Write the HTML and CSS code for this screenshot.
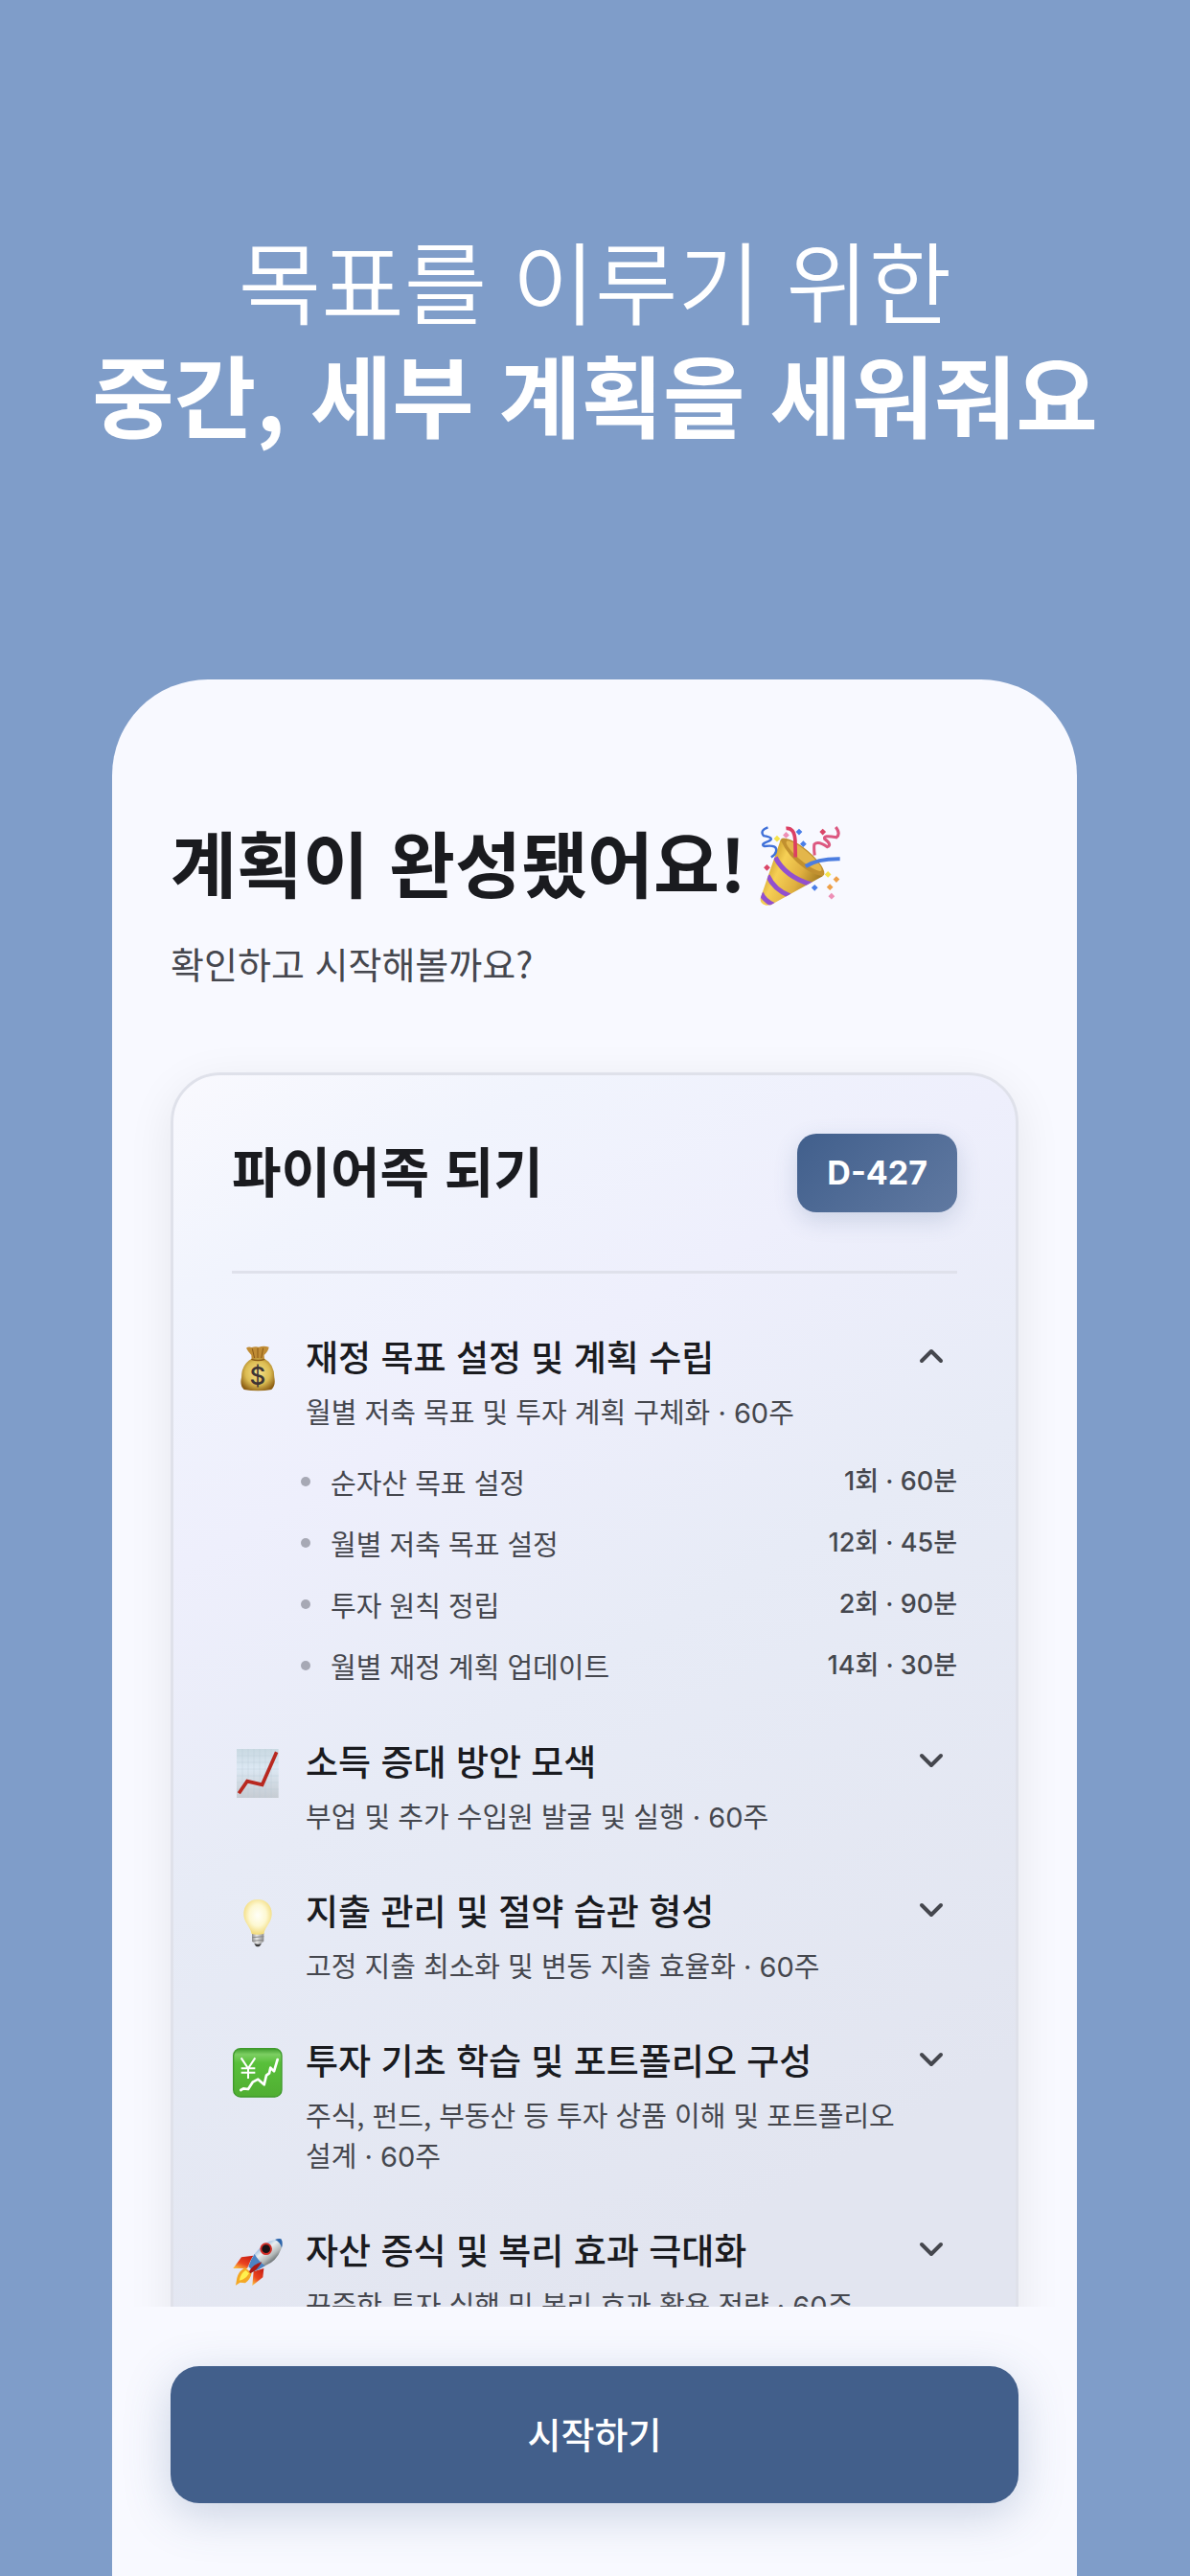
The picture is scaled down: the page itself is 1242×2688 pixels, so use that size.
FILE: index.html
```html
<!DOCTYPE html>
<html lang="ko">
<head>
    <meta charset="UTF-8">
    <meta name="viewport" content="width=device-width, initial-scale=1.0">
    <title>계획이 완성됐어요!</title>
    <link rel="stylesheet" href="styles.css">
</head>
<body>
    <header class="intro">
        <p>목표를 이루기 위한</p>
        <p><strong>중간, 세부 계획을 세워줘요</strong></p>
    </header>

    <main class="phone">
        <div class="content">
            <h1>계획이 완성됐어요!
                <svg class="popper" viewBox="72 94 248 248" aria-hidden="true">
                    <defs>
                        <linearGradient id="cone" x1="0" y1="0.3" x2="1" y2="0.8">
                            <stop offset="0" stop-color="#b98618"/>
                            <stop offset="0.3" stop-color="#f6d055"/>
                            <stop offset="0.6" stop-color="#e0b040"/>
                            <stop offset="1" stop-color="#8a6414"/>
                        </linearGradient>
                        <clipPath id="cone-clip"><path d="M136 137L74 316Q72 334 92 338L106 337L266 248Q262 236 230 228Q170 200 136 137Z"/></clipPath>
                    </defs>
                    <ellipse cx="203" cy="190" rx="86" ry="26" transform="rotate(40 203 190)" fill="#c1902f"/>
                    <ellipse cx="208" cy="186" rx="70" ry="16" transform="rotate(40 208 186)" fill="#e3b64b"/>
                    <path d="M136 137L74 316Q72 334 92 338L106 337L266 248Q240 244 212 226Q160 190 136 137Z" fill="url(#cone)"/>
                    <g clip-path="url(#cone-clip)" fill="none" stroke="#9250cf" stroke-width="15">
                        <path d="M120 190Q150 250 232 274"/>
                        <path d="M96 246Q116 290 166 310"/>
                        <path d="M76 300Q84 322 116 338"/>
                    </g>
                    <path d="M153 101Q178 98 181 138L182 190" fill="none" stroke="#dc3f63" stroke-width="11"/>
                    <path d="M213 218Q250 194 319 195" fill="none" stroke="#4b7de0" stroke-width="12"/>
                    <path d="M97 98Q70 108 84 124Q120 130 100 140Q72 150 86 156Q128 150 122 172Q120 182 107 190" fill="none" stroke="#3f70d8" stroke-width="7"/>
                    <path d="M306 97Q322 118 308 129Q266 120 272 134Q296 152 280 158Q252 138 240 150Q238 160 241 184" fill="none" stroke="#dc5880" stroke-width="9"/>
                    <path d="M193 102l10 10-10 10-10-10zM206 139l10 10-10 10-10-10zM241 274l10 10-10 10-10-10z" fill="#4a7ee8"/>
                    <path d="M125 123l10 10-10 10-10-10zM282 233l10 10-10 10-10-10z" fill="#f5e34c"/>
                    <path d="M153 112l10 10-10 10-10-10zM293 300l10 10-10 10-10-10z" fill="#ee8fb6"/>
                    <path d="M266 102l10 10-10 10-10-10zM94 212l10 10-10 10-10-10z" fill="#da4668"/>
                    <path d="M308 248l10 10-10 10-10-10zM288 272l10 10-10 10-10-10z" fill="#eea048"/>
                </svg>
            </h1>
            <p class="lead">확인하고 시작해볼까요?</p>

            <section class="card">
                <div class="card-header">
                    <h2>파이어족 되기</h2>
                    <span class="badge">D-427</span>
                </div>

                <div class="plan">
                    <button type="button" class="plan-toggle" aria-expanded="true">
                        <svg class="emoji" viewBox="66 123 162 162" aria-hidden="true">
                            <defs>
                                <radialGradient id="bag" cx="0.5" cy="0.45" r="0.6">
                                    <stop offset="0" stop-color="#f5e28a"/>
                                    <stop offset="0.6" stop-color="#dcbc52"/>
                                    <stop offset="1" stop-color="#8d5f14"/>
                                </radialGradient>
                            </defs>
                            <path d="M111 140Q118 134 128 138Q140 134 150 137Q166 132 182 137Q180 150 167 162L168 176H128L127 162Q116 150 111 140Z" fill="#c08c35"/>
                            <path d="M130 142L137 172M147 140V172M164 140L158 172" stroke="#8b5b16" stroke-width="3"/>
                            <path d="M127 174Q148 168 169 174Q199 190 199 232Q204 258 190 270Q148 278 104 270Q90 258 96 232Q96 192 127 174Z" fill="url(#bag)"/>
                            <path d="M127 175Q148 182 169 175" fill="none" stroke="#8b5b16" stroke-width="4"/>
                            <text x="147" y="256" class="bag-sign">$</text>
                        </svg>
                        <span class="plan-text">
                            <span class="plan-title">재정 목표 설정 및 계획 수립</span>
                            <span class="plan-desc">월별 저축 목표 및 투자 계획 구체화 <span class="num">· 60</span>주</span>
                        </span>
                        <svg class="chevron" viewBox="0 0 54 56" aria-hidden="true"><path d="M17 33L27 23L37 33"/></svg>
                    </button>
                    <ul class="tasks">
                        <li><span>순자산 목표 설정</span><span class="amount">1회 · 60분</span></li>
                        <li><span>월별 저축 목표 설정</span><span class="amount">12회 · 45분</span></li>
                        <li><span>투자 원칙 정립</span><span class="amount">2회 · 90분</span></li>
                        <li><span>월별 재정 계획 업데이트</span><span class="amount">14회 · 30분</span></li>
                    </ul>
                </div>

                <div class="plan">
                    <button type="button" class="plan-toggle" aria-expanded="false">
                        <svg class="emoji" viewBox="36 72 162 162" aria-hidden="true">
                            <defs>
                                <linearGradient id="sheet" x1="0" y1="0" x2="0" y2="1">
                                    <stop offset="0" stop-color="#c9d9e2"/>
                                    <stop offset="0.4" stop-color="#dce8f3"/>
                                    <stop offset="1" stop-color="#c6ccd3"/>
                                </linearGradient>
                            </defs>
                            <rect x="51" y="78" width="131" height="153" fill="url(#sheet)"/>
                            <path d="M69 78V231M87 78V231M105 78V231M123 78V231M141 78V231M159 78V231M51 99H182M51 120H182M51 141H182M51 162H182M51 183H182M51 204H182" stroke="#b5c8d8" stroke-width="1"/>
                            <path d="M58 217L84 179L131 190L176 88" fill="none" stroke="#b8281f" stroke-width="11"/>
                        </svg>
                        <span class="plan-text">
                            <span class="plan-title">소득 증대 방안 모색</span>
                            <span class="plan-desc">부업 및 추가 수입원 발굴 및 실행 <span class="num">· 60</span>주</span>
                        </span>
                        <svg class="chevron" viewBox="0 0 54 56" aria-hidden="true"><path d="M17 23L27 33L37 23"/></svg>
                    </button>
                </div>

                <div class="plan">
                    <button type="button" class="plan-toggle" aria-expanded="false">
                        <svg class="emoji" viewBox="36 540 162 162" aria-hidden="true">
                            <defs>
                                <radialGradient id="bulb" cx="0.5" cy="0.45" r="0.55">
                                    <stop offset="0" stop-color="#fffff8"/>
                                    <stop offset="0.55" stop-color="#fdf8d2"/>
                                    <stop offset="1" stop-color="#f2da78"/>
                                </radialGradient>
                                <linearGradient id="socket">
                                    <stop offset="0" stop-color="#8d8d8d"/>
                                    <stop offset="0.4" stop-color="#e8e8e8"/>
                                    <stop offset="1" stop-color="#8a8a8a"/>
                                </linearGradient>
                            </defs>
                            <path d="M106 688L111 695Q117 699 123 695L129 688Z" fill="#3c3c3c"/>
                            <path d="M99 654H136V680Q118 698 99 680Z" fill="url(#socket)"/>
                            <path d="M99 668L136 665M100 679L135 676" stroke="#8a8a8a" stroke-width="3"/>
                            <path d="M117 549C143 549 161 568 161 594C161 622 140 634 136 657Q117 662 98 657C94 634 73 622 73 594C73 568 91 549 117 549Z" fill="url(#bulb)"/>
                        </svg>
                        <span class="plan-text">
                            <span class="plan-title">지출 관리 및 절약 습관 형성</span>
                            <span class="plan-desc">고정 지출 최소화 및 변동 지출 효율화 <span class="num">· 60</span>주</span>
                        </span>
                        <svg class="chevron" viewBox="0 0 54 56" aria-hidden="true"><path d="M17 23L27 33L37 23"/></svg>
                    </button>
                </div>

                <div class="plan">
                    <button type="button" class="plan-toggle" aria-expanded="false">
                        <svg class="emoji" viewBox="36 78 162 162" aria-hidden="true">
                            <defs>
                                <linearGradient id="yen" x1="0" y1="0" x2="0" y2="1">
                                    <stop offset="0" stop-color="#3f9c2c"/>
                                    <stop offset="0.12" stop-color="#7ccf62"/>
                                    <stop offset="0.3" stop-color="#58bf3a"/>
                                    <stop offset="1" stop-color="#50ae32"/>
                                </linearGradient>
                            </defs>
                            <rect x="41" y="86" width="151" height="151" rx="22" fill="url(#yen)" stroke="#3f9a2b" stroke-width="4"/>
                            <path d="M65 115L87 148L109 115M87 146V180M65 148H109M65 161H109" fill="none" stroke="#fff" stroke-width="6"/>
                            <path d="M64 216L72 211L87 213L101 191L118 182L137 199L144 170L153 163L157 146L168 157L179 120" fill="none" stroke="#fff" stroke-width="8" stroke-linecap="round" stroke-linejoin="round"/>
                        </svg>
                        <span class="plan-text">
                            <span class="plan-title">투자 기초 학습 및 포트폴리오 구성</span>
                            <span class="plan-desc">주식, 펀드, 부동산 등 투자 상품 이해 및 포트폴리오 설계 <span class="num">· 60</span>주</span>
                        </span>
                        <svg class="chevron" viewBox="0 0 54 56" aria-hidden="true"><path d="M17 23L27 33L37 23"/></svg>
                    </button>
                </div>

                <div class="plan">
                    <button type="button" class="plan-toggle" aria-expanded="false">
                        <svg class="emoji" viewBox="36 42 162 162" aria-hidden="true">
                            <defs>
                                <linearGradient id="hull" x1="0.2" y1="0.2" x2="0.7" y2="0.8">
                                    <stop offset="0" stop-color="#5c97d6"/>
                                    <stop offset="0.4" stop-color="#e9eef0"/>
                                    <stop offset="0.7" stop-color="#b3b8b8"/>
                                    <stop offset="1" stop-color="#4d5357"/>
                                </linearGradient>
                                <linearGradient id="fin" x1="0.8" y1="0" x2="0.2" y2="1">
                                    <stop offset="0" stop-color="#c81e14"/>
                                    <stop offset="0.6" stop-color="#ec4520"/>
                                    <stop offset="1" stop-color="#f9b83c"/>
                                </linearGradient>
                            </defs>
                            <path d="M103 104L66 109L40 144L84 144Z" fill="url(#fin)"/>
                            <path d="M136 144L133 172L100 198L104 154Z" fill="url(#fin)"/>
                            <path d="M77 142Q58 152 52 174L48 197L62 188L78 190Q94 178 98 158Z" fill="#f4a825"/>
                            <path d="M80 150Q64 158 59 182Q80 178 90 160Z" fill="#fff04f"/>
                            <path d="M88 138Q96 108 120 84Q150 52 190 52Q198 62 190 84Q176 122 140 136Q120 148 103 154Z" fill="url(#hull)"/>
                            <path d="M171 54Q182 50 190 52Q197 62 192 80Q188 62 171 54Z" fill="#2c65ac"/>
                            <path d="M88 138Q94 118 107 99Q118 120 140 136Q122 148 103 154Z" fill="#4b83c4"/>
                            <path d="M130 124Q104 130 90 154L94 160Q116 150 130 124Z" fill="#a81914"/>
                            <circle cx="143" cy="83" r="16" fill="#1b1416" stroke="#d32d26" stroke-width="6"/>
                        </svg>
                        <span class="plan-text">
                            <span class="plan-title">자산 증식 및 복리 효과 극대화</span>
                            <span class="plan-desc">꾸준한 투자 실행 및 복리 효과 활용 전략 <span class="num">· 60</span>주</span>
                        </span>
                        <svg class="chevron" viewBox="0 0 54 56" aria-hidden="true"><path d="M17 23L27 33L37 23"/></svg>
                    </button>
                </div>
            </section>
        </div>

        <footer class="bottom-bar">
            <button type="button" class="start">시작하기</button>
        </footer>
    </main>
</body>
</html>
```
FILE: styles.css
```css
* {
    box-sizing: border-box;
}

body {
    font-family: "Noto Sans CJK KR", "Noto Sans", sans-serif;
    background-color: #7f9dc9;
    color: #1a1b1f;
    margin: 0;
    height: 100vh;
    display: flex;
    flex-direction: column;
    overflow: hidden;
}

h1, h2, p, ul {
    margin: 0;
    padding: 0;
}

button {
    font-family: inherit;
    color: inherit;
    border: none;
    cursor: pointer;
}

.intro {
    padding: 232px 24px 240px;
    color: #fff;
    text-align: center;
    font-size: 94px;
    line-height: 118px;
    font-weight: 350;
}

.intro strong {
    font-size: 93px;
    font-weight: 700;
}

.phone {
    flex: 1;
    min-height: 0;
    margin: 0 118px 0 117px;
    display: flex;
    flex-direction: column;
    background-color: #f8f9ff;
    border-radius: 100px 100px 0 0;
    overflow: hidden;
}

.content {
    flex: 1;
    min-height: 0;
    overflow: hidden;
    padding: 138px 61px 0;
}

h1 {
    display: flex;
    align-items: center;
    gap: 14px;
    font-size: 75px;
    line-height: 104px;
    font-weight: 700;
}

.popper {
    width: 84px;
    height: 84px;
    margin-top: 10px;
}

.lead {
    margin-top: 26px;
    font-size: 38px;
    line-height: 56px;
    color: #45474e;
}

.card {
    margin-top: 86px;
    padding: 61px;
    border: 3px solid #dfe1ea;
    border-radius: 52px;
    background: linear-gradient(150deg, #f9f9fe 0%, #f1f4fd 12%, #eeeffc 27%, #e7ebf6 45%, #e2e5f0 80%, #e2e5f0 100%);
    box-shadow: 0 12px 48px rgba(0, 0, 0, 0.08);
}

.card-header {
    display: flex;
    align-items: center;
    justify-content: space-between;
    padding-bottom: 61px;
    border-bottom: 3px solid #dfe1eb;
    margin-bottom: 58px;
}

h2 {
    margin-bottom: 8px;
    font-size: 56px;
    line-height: 74px;
    font-weight: 700;
}

.badge {
    padding: 0 31px;
    border-radius: 20px;
    background: linear-gradient(135deg, #415f8c, #6079a1);
    box-shadow: 0 8px 24px rgba(65, 95, 140, 0.2);
    color: #fff;
    font-family: Inter, sans-serif;
    font-size: 34px;
    line-height: 82px;
    font-weight: 700;
}

.plan {
    margin-bottom: 50px;
}

.plan-toggle {
    display: flex;
    align-items: flex-start;
    width: 100%;
    padding: 0;
    background: none;
    text-align: left;
}

.emoji {
    flex: none;
    width: 54px;
    height: 54px;
    margin: 14px 23px 0 0;
}

.bag-sign {
    font-family: Inter, sans-serif;
    font-size: 78px;
    font-weight: 500;
    text-anchor: middle;
    fill: #3d3434;
}

.plan-text {
    flex: 1;
}

.plan-title {
    display: block;
    font-size: 37px;
    line-height: 56px;
    font-weight: 500;
}

.plan-desc {
    display: block;
    margin-top: 8px;
    font-size: 29px;
    line-height: 42px;
    color: #45474e;
    word-break: keep-all;
}

.num {
    font-family: Inter, sans-serif;
    line-height: 1;
}

.chevron {
    flex: none;
    width: 54px;
    height: 56px;
    fill: none;
    stroke: #45474e;
    stroke-width: 4;
    stroke-linecap: round;
    stroke-linejoin: round;
}

.tasks {
    list-style: none;
    display: flex;
    flex-direction: column;
    gap: 22px;
    margin-top: 32px;
    padding-left: 72px;
    font-size: 29px;
    line-height: 42px;
    color: #45474e;
}

.tasks li {
    display: flex;
    align-items: center;
    height: 42px;
}

.tasks li::before {
    content: "";
    width: 10px;
    height: 10px;
    margin-right: 21px;
    border-radius: 50%;
    background-color: #a7a9b5;
}

.amount {
    margin-left: auto;
    font-family: Inter, "Noto Sans CJK KR", sans-serif;
    font-size: 27px;
    font-weight: 500;
}

.bottom-bar {
    padding: 62px 61px 76px;
}

.start {
    display: block;
    width: 100%;
    height: 143px;
    padding: 0 0 4px;
    border-radius: 30px;
    background-color: #425f8b;
    box-shadow: 0 12px 48px rgba(65, 95, 140, 0.25);
    color: #fff;
    font-size: 38px;
    font-weight: 500;
}
```
